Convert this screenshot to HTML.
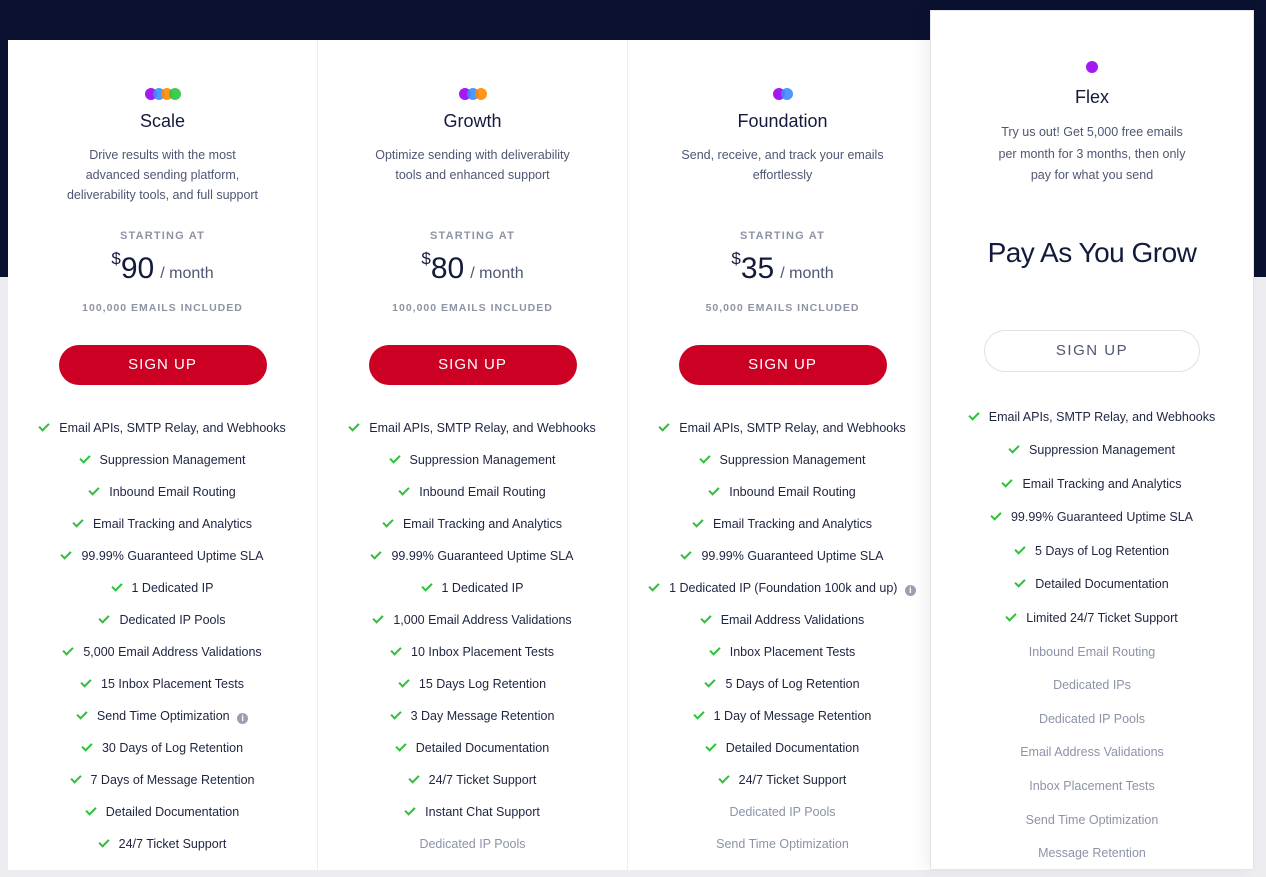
<!DOCTYPE html><html><head><style>
body{margin:0;width:1266px;height:864px;overflow:hidden;background:#ececf1;font-family:"Liberation Sans",sans-serif;position:relative}
.band{position:absolute;left:0;top:0;width:1266px;height:277px;background:#0a1230}
.cards{position:absolute;left:8px;top:40px;width:930px;height:830px;background:#fff;display:flex}
.c{width:310px;border-right:1px solid #eeeef2;box-sizing:border-box;text-align:center;position:relative}
.dots{height:12px;margin-top:48px;display:flex;justify-content:center}
.dots span{width:12px;height:12px;border-radius:50%;margin:0 -2px;opacity:.9}
h2{margin:10px 0 0;font-size:18px;font-weight:500;color:#131a3c;line-height:22px}
.d{font-size:12.5px;color:#4f5672;line-height:20px;margin-top:13px;height:60px}
.sa{font-size:11px;font-weight:bold;letter-spacing:1.2px;color:#8e93a6;margin-top:25px}
.p{margin-top:7px;color:#131a3c;height:38px}
.p sup{font-size:17px;vertical-align:14px}.p b{font-size:30px;font-weight:400}.p i{font-style:normal;font-size:16px;color:#4f5672;margin-left:6px}
.ei{font-size:10.5px;font-weight:bold;letter-spacing:1px;color:#8e93a6;margin-top:15px}
.btn{width:208px;height:40px;border-radius:20px;background:#cc0022;color:#fff;font-size:15px;letter-spacing:1px;line-height:40px;margin:31px auto 0}
ul{list-style:none;padding:0;margin:33px 0 0}
li{font-size:12.5px;color:#1f2440;height:32px;line-height:20px}
li.g{color:#8d93a8}
li:not(.g)::before{content:"";display:inline-block;width:8px;height:4px;border-left:2px solid #2ec13a;border-bottom:2px solid #2ec13a;transform:rotate(-45deg);margin-right:10px;vertical-align:3px}
.inf{display:inline-block;width:11px;height:11px;border-radius:50%;background:#9aa0b1;color:#fff;font-size:9px;line-height:11px;font-weight:bold;vertical-align:-1px;margin-left:4px}
.flex{position:absolute;left:930px;top:10px;width:324px;height:860px;background:#fff;text-align:center;box-shadow:-6px 0 14px rgba(0,0,0,.06);border:1px solid #e4e4ea;box-sizing:border-box}
.flex .d{line-height:21.5px;margin-top:14px;height:auto}
.flex li{height:33.6px}
</style></head><body>
<div class="band"></div>
<div class="cards">
<div class="c"><div class="dots"><span style="background:#9b00f0"></span><span style="background:#3a8cff"></span><span style="background:#ff8a00"></span><span style="background:#28c840"></span></div><h2>Scale</h2>
<div class="d">Drive results with the most<br>advanced sending platform,<br>deliverability tools, and full support</div>
<div class="sa">STARTING AT</div><div class="p"><sup>$</sup><b>90</b><i>/ month</i></div><div class="ei">100,000 EMAILS INCLUDED</div><div class="btn">SIGN UP</div>
<ul><li>Email APIs, SMTP Relay, and Webhooks</li><li>Suppression Management</li><li>Inbound Email Routing</li><li>Email Tracking and Analytics</li><li>99.99% Guaranteed Uptime SLA</li><li>1 Dedicated IP</li><li>Dedicated IP Pools</li><li>5,000 Email Address Validations</li><li>15 Inbox Placement Tests</li><li>Send Time Optimization <span class="inf">i</span></li><li>30 Days of Log Retention</li><li>7 Days of Message Retention</li><li>Detailed Documentation</li><li>24/7 Ticket Support</li></ul></div>
<div class="c"><div class="dots"><span style="background:#9b00f0"></span><span style="background:#3a8cff"></span><span style="background:#ff8a00"></span></div><h2>Growth</h2>
<div class="d">Optimize sending with deliverability<br>tools and enhanced support</div>
<div class="sa">STARTING AT</div><div class="p"><sup>$</sup><b>80</b><i>/ month</i></div><div class="ei">100,000 EMAILS INCLUDED</div><div class="btn">SIGN UP</div>
<ul><li>Email APIs, SMTP Relay, and Webhooks</li><li>Suppression Management</li><li>Inbound Email Routing</li><li>Email Tracking and Analytics</li><li>99.99% Guaranteed Uptime SLA</li><li>1 Dedicated IP</li><li>1,000 Email Address Validations</li><li>10 Inbox Placement Tests</li><li>15 Days Log Retention</li><li>3 Day Message Retention</li><li>Detailed Documentation</li><li>24/7 Ticket Support</li><li>Instant Chat Support</li><li class="g">Dedicated IP Pools</li></ul></div>
<div class="c"><div class="dots"><span style="background:#9b00f0"></span><span style="background:#3a8cff"></span></div><h2>Foundation</h2>
<div class="d">Send, receive, and track your emails<br>effortlessly</div>
<div class="sa">STARTING AT</div><div class="p"><sup>$</sup><b>35</b><i>/ month</i></div><div class="ei">50,000 EMAILS INCLUDED</div><div class="btn">SIGN UP</div>
<ul><li>Email APIs, SMTP Relay, and Webhooks</li><li>Suppression Management</li><li>Inbound Email Routing</li><li>Email Tracking and Analytics</li><li>99.99% Guaranteed Uptime SLA</li><li>1 Dedicated IP (Foundation 100k and up) <span class="inf">i</span></li><li>Email Address Validations</li><li>Inbox Placement Tests</li><li>5 Days of Log Retention</li><li>1 Day of Message Retention</li><li>Detailed Documentation</li><li>24/7 Ticket Support</li><li class="g">Dedicated IP Pools</li><li class="g">Send Time Optimization</li></ul></div>
</div>
<div class="flex"><div class="dots" style="margin-top:50px"><span style="background:#9b00f0"></span></div><h2 style="margin-top:13px">Flex</h2>
<div class="d">Try us out! Get 5,000 free emails<br>per month for 3 months, then only<br>pay for what you send</div>
<div style="font-size:28px;color:#131a3c;margin-top:50px;letter-spacing:-.5px">Pay As You Grow</div>
<div style="width:214px;height:40px;border:1px solid #e0e0e6;border-radius:21px;margin:61px auto 0;line-height:40px;font-size:15px;letter-spacing:1.5px;color:#4f5672">SIGN UP</div>
<ul style="margin-top:35px"><li>Email APIs, SMTP Relay, and Webhooks</li><li>Suppression Management</li><li>Email Tracking and Analytics</li><li>99.99% Guaranteed Uptime SLA</li><li>5 Days of Log Retention</li><li>Detailed Documentation</li><li>Limited 24/7 Ticket Support</li><li class="g">Inbound Email Routing</li><li class="g">Dedicated IPs</li><li class="g">Dedicated IP Pools</li><li class="g">Email Address Validations</li><li class="g">Inbox Placement Tests</li><li class="g">Send Time Optimization</li><li class="g">Message Retention</li></ul></div>
</body></html>
